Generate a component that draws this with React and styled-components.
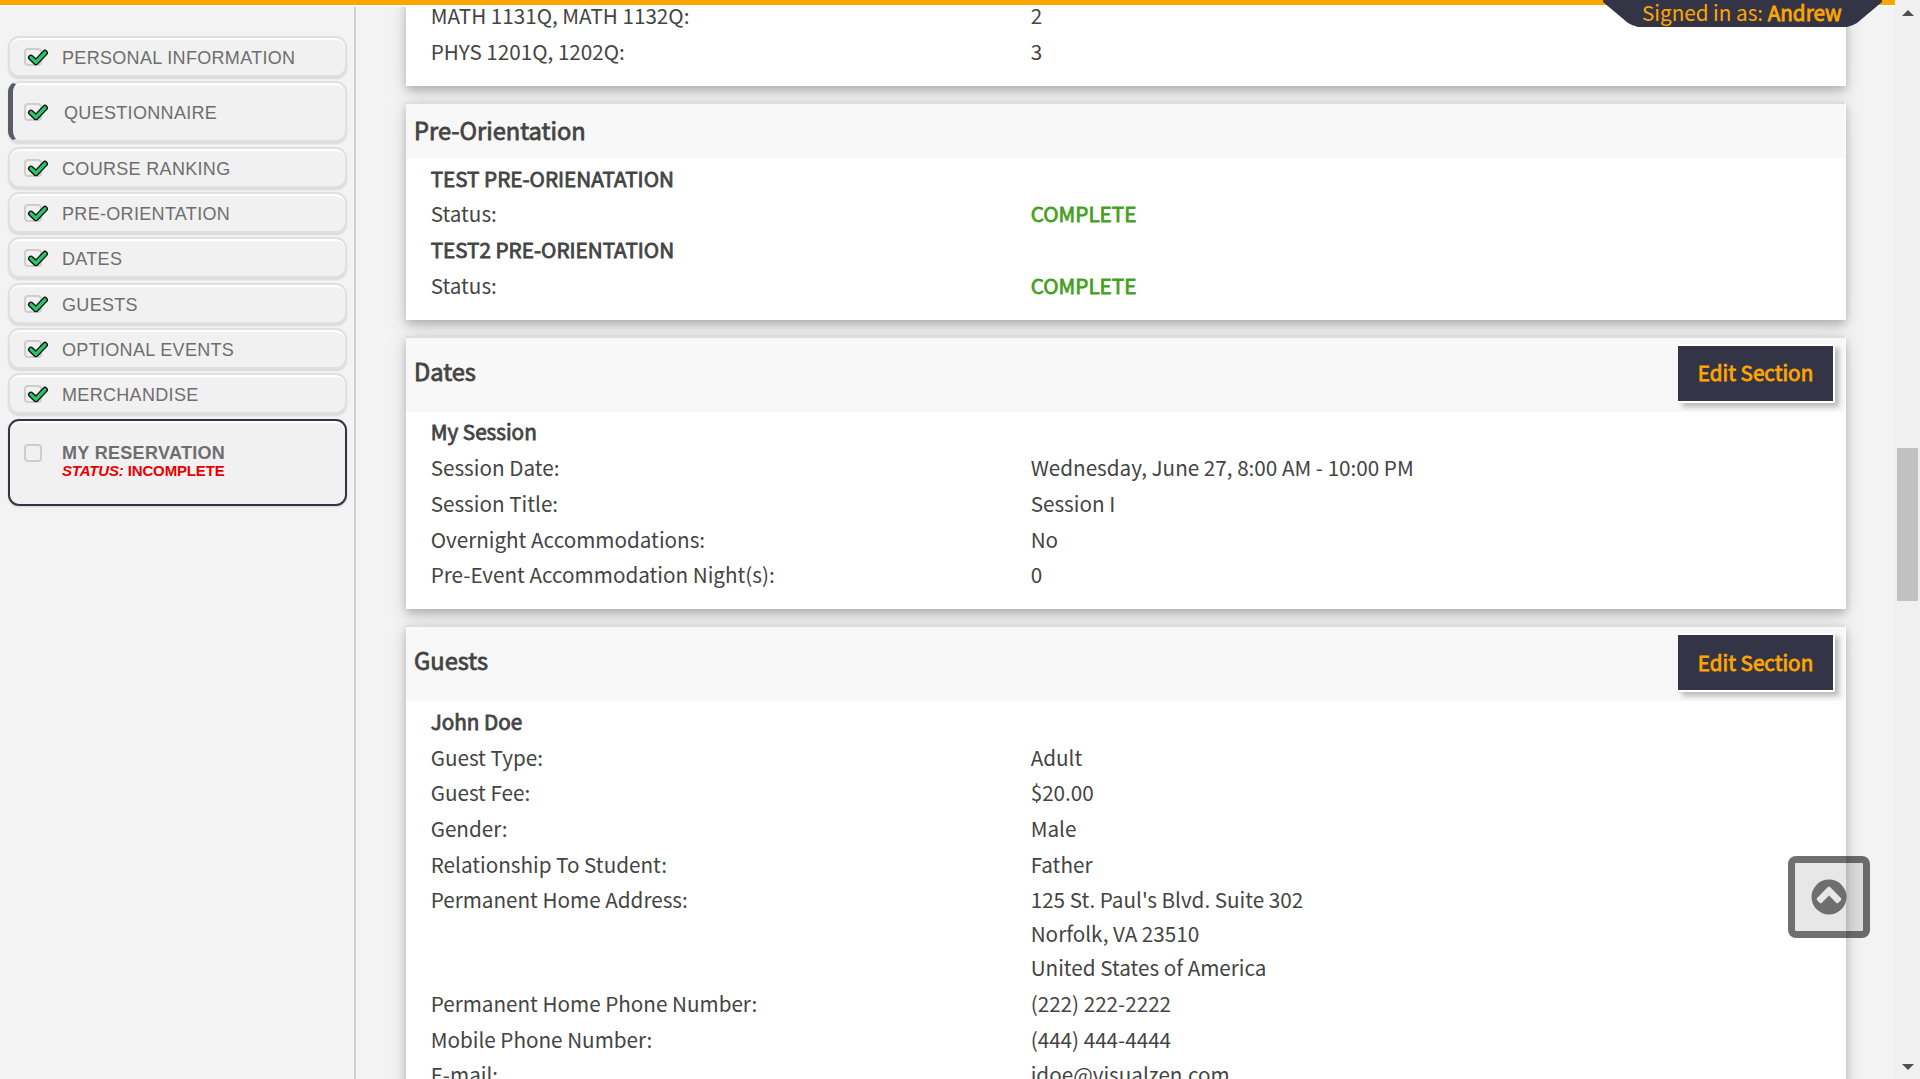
import React from 'react';
import styled, { createGlobalStyle, css } from 'styled-components';

const NAVY = '#333546';
const ORANGE = '#ffa500';
const SANS = '"Noto Sans CJK SC", "Source Sans Pro", sans-serif';

const GlobalStyle = createGlobalStyle`
  * { box-sizing: border-box; }
  body {
    margin: 0;
    overflow: hidden;
    background: #f3f3f3;
    color: #444;
    font-family: ${SANS};
    font-size: 20.66px;
    line-height: 33.95px;
  }
`;

const heavy = css`-webkit-text-stroke: 0.8px currentColor;`;

const Window = styled.div`
  display: flex;
  height: 1079px;
  overflow: hidden;
`;

const Page = styled.div`
  position: relative;
  flex: 1;
  min-width: 0;
  display: flex;
  flex-direction: column;
`;

const TopBar = styled.header`
  flex: none;
  height: 7px;
  background: ${ORANGE};
  border-bottom: 2px solid #fff;
`;

const SignedIn = styled.div`
  position: absolute;
  top: 0;
  right: 13px;
  width: 279px;
  height: 27px;
  padding-left: 39px;
  line-height: 25px;
  white-space: nowrap;
  color: ${ORANGE};
  background: ${NAVY};
  clip-path: polygon(0 0, 100% 0, 100% 2px, 254px 23px, 250px 25px, 244px 27px, 35px 27px, 29px 25px, 25px 23px, 0 2px);
  b { font-weight: 400; ${heavy} }
`;

const Body = styled.div`
  flex: 1;
  min-height: 0;
  display: flex;
  overflow: hidden;
`;

const Sidebar = styled.nav`
  flex: none;
  width: 356px;
  padding: 29px 7px 0 8px;
  border-right: 2px solid #cfcfcf;
  display: flex;
  flex-direction: column;
  gap: 4.35px;
  font-family: "Liberation Sans", Arial, sans-serif;
  color: #6e6e6e;
`;

const NavItem = styled.a`
  flex: none;
  width: 339px;
  height: ${p => p.$height || 41}px;
  display: flex;
  align-items: center;
  padding-left: ${p => (p.$current ? 11 : 14)}px;
  border: 2px solid ${p => (p.$outlined ? NAVY : '#e0e0e0')};
  ${p => p.$current && 'border-left: 5px solid #5a5c69;'}
  border-radius: 11px;
  background: #f1f1f1;
  box-shadow: ${p => (p.$outlined ? '0 1px 2px rgba(0,0,0,.12)' : '0 2px 2px rgba(0,0,0,.11)')}, inset 0 2px 1px #fff;
`;

const CheckBox = styled.span`
  position: relative;
  flex: none;
  width: 18px;
  height: 18px;
  margin-right: ${p => (p.$current ? 22 : 20)}px;
  margin-top: ${p => (p.$up ? -19 : 1)}px;
  border: 2px solid #cecece;
  border-radius: 4px;
  svg { position: absolute; left: 1px; top: -1px; }
`;

const NavText = styled.span`
  font-size: 18px;
  line-height: 20px;
  letter-spacing: 0.32px;
  white-space: nowrap;
  margin-top: ${p => (p.$bold ? -2.5 : 2.7)}px;
  font-weight: ${p => (p.$bold ? 700 : 400)};
`;

const NavStatus = styled.small`
  display: block;
  margin-top: -1px;
  font-size: 15px;
  letter-spacing: -0.15px;
  line-height: 17px;
  font-weight: 700;
  color: #e60000;
`;

const Content = styled.main`
  flex: 1;
  display: flex;
  flex-direction: column;
  gap: 16.2px;
  margin-top: -8px;
  padding: 0 49px 0 50px;
`;

const Card = styled.section`
  flex: none;
  background: #fff;
  box-shadow: 0 4px 8px rgba(0, 0, 0, 0.2), 0 6px 20px rgba(0, 0, 0, 0.13);
`;

const CardHead = styled.div`
  height: ${p => (p.$tall ? 76 : 56)}px;
  margin-right: 1px;
  padding: 6px 10px 0 8px;
  display: flex;
  justify-content: space-between;
  align-items: flex-start;
  background: #f8f8f8;
  border-top: 2px solid #dedede;
`;

const CardTitle = styled.h2`
  margin: ${p => (p.$tall ? 10 : 3)}px 0 0;
  font-size: 23.65px;
  font-weight: 400;
  line-height: 34px;
  ${heavy}
`;

const EditButton = styled.button`
  width: 157px;
  height: 59px;
  padding: 0 0 2.5px;
  border: 2px solid #fff;
  border-left: 0;
  background: ${NAVY};
  color: ${ORANGE};
  font: 400 20.66px/30px ${SANS};
  box-shadow: 4px 4px 5px rgba(0, 0, 0, 0.25);
  ${heavy}
`;

const Rows = styled.div`
  padding: ${p => (p.$flush ? '0.3px 0 14.9px' : '3.8px 0 15.3px')} 24.7px;
`;

const Row = styled.div`
  display: grid;
  grid-template-columns: 600px 1fr;
  padding-bottom: 1.72px;
`;

const Strong = styled.span`${heavy}`;

const Complete = styled.span`
  color: #479f22;
  ${heavy}
`;

const Line = styled.div``;

const ToTop = styled.button`
  position: absolute;
  left: 1788px;
  top: 856px;
  width: 82px;
  height: 82px;
  padding: 0 0 1px;
  display: flex;
  align-items: center;
  justify-content: center;
  border: 7px solid rgba(0, 0, 0, 0.56);
  border-radius: 8px;
  background: rgba(0, 0, 0, 0.095);
  background-clip: padding-box;
`;

const ScrollTrack = styled.div`
  flex: none;
  width: 25px;
  display: flex;
  flex-direction: column;
  align-items: center;
  justify-content: space-between;
  padding: 10px 0 9px;
  background: #f0f0f0;
`;

const ScrollThumb = styled.div`
  width: 21px;
  height: 153px;
  margin-bottom: 31px;
  background: #c1c1c1;
`;

const Arrow = styled.div`
  width: 0;
  height: 0;
  border: 6px solid transparent;
  ${p => (p.$down
    ? 'border-bottom: 0; border-top-color: #505050;'
    : 'border-top: 0; border-bottom-color: #505050;')}
`;

const Tick = () => (
  <svg width="21" height="18" viewBox="0 0 21 18" fill="none" strokeLinejoin="round" strokeLinecap="round">
    <path d="M4 8.6 L9 13.2 L18 3.8" stroke="#111" strokeWidth="6" />
    <path d="M4 8.6 L9 13.2 L18 3.8" stroke="#2ac769" strokeWidth="3.3" />
  </svg>
);

const NAV = ['PERSONAL INFORMATION', 'QUESTIONNAIRE', 'COURSE RANKING', 'PRE-ORIENTATION', 'DATES', 'GUESTS', 'OPTIONAL EVENTS', 'MERCHANDISE'];

const SECTIONS = [
  { rows: [['MATH 1131Q, MATH 1132Q:', '2'], ['PHYS 1201Q, 1202Q:', '3']] },
  {
    title: 'Pre-Orientation',
    rows: [
      ['TEST PRE-ORIENATATION'],
      ['Status:', <Complete>COMPLETE</Complete>],
      ['TEST2 PRE-ORIENTATION'],
      ['Status:', <Complete>COMPLETE</Complete>],
    ],
  },
  {
    title: 'Dates',
    editable: true,
    rows: [
      ['My Session'],
      ['Session Date:', 'Wednesday, June 27, 8:00 AM - 10:00 PM'],
      ['Session Title:', 'Session I'],
      ['Overnight Accommodations:', 'No'],
      ['Pre-Event Accommodation Night(s):', '0'],
    ],
  },
  {
    title: 'Guests',
    editable: true,
    rows: [
      ['John Doe'],
      ['Guest Type:', 'Adult'],
      ['Guest Fee:', '$20.00'],
      ['Gender:', 'Male'],
      ['Relationship To Student:', 'Father'],
      ['Permanent Home Address:', ["125 St. Paul's Blvd. Suite 302", 'Norfolk, VA 23510', 'United States of America'].map(l => <Line key={l}>{l}</Line>)],
      ['Permanent Home Phone Number:', '(222) 222-2222'],
      ['Mobile Phone Number:', '(444) 444-4444'],
      ['E-mail:', 'jdoe@visualzen.com'],
    ],
  },
];

function Section({ title, editable, rows }) {
  return (
    <Card>
      {title && (
        <CardHead $tall={editable}>
          <CardTitle $tall={editable}>{title}</CardTitle>
          {editable && <EditButton>Edit Section</EditButton>}
        </CardHead>
      )}
      <Rows $flush={!title}>
        {rows.map(([label, value], i) => (
          <Row key={i}>
            {value ? <span>{label}</span> : <Strong>{label}</Strong>}
            {value && <div>{value}</div>}
          </Row>
        ))}
      </Rows>
    </Card>
  );
}

export default function App() {
  return (
    <Window>
      <GlobalStyle />
      <Page>
        <TopBar />
        <Body>
          <Sidebar>
            {NAV.map((name, i) => (
              <NavItem key={name} $current={i === 1} $height={i === 1 ? 61 : 41}>
                <CheckBox $current={i === 1}><Tick /></CheckBox>
                <NavText>{name}</NavText>
              </NavItem>
            ))}
            <NavItem $outlined $height={87}>
              <CheckBox $up />
              <NavText $bold>
                MY RESERVATION
                <NavStatus><em>STATUS:</em> INCOMPLETE</NavStatus>
              </NavText>
            </NavItem>
          </Sidebar>
          <Content>
            {SECTIONS.map((s, i) => <Section key={i} {...s} />)}
          </Content>
        </Body>
        <SignedIn>Signed in as: <b>Andrew</b></SignedIn>
        <ToTop aria-label="Back to top">
          <svg width="36" height="36" viewBox="-18 -18 36 36">
            <path
              fill="rgba(0,0,0,.52)"
              fillRule="evenodd"
              d="M0 -17.5 A17.5 17.5 0 1 1 0 17.5 A17.5 17.5 0 1 1 0 -17.5 Z M-1.1 -9.9 L-11.9 1.1 Q-12.9 2.2 -11.9 3.3 L-9.4 5.8 Q-8.3 6.9 -7.2 5.8 L0 -1.4 L7.2 5.8 Q8.3 6.9 9.4 5.8 L11.9 3.3 Q12.9 2.2 11.9 1.1 L1.1 -9.9 Q0 -11 -1.1 -9.9 Z"
            />
          </svg>
        </ToTop>
      </Page>
      <ScrollTrack>
        <Arrow />
        <ScrollThumb />
        <Arrow $down />
      </ScrollTrack>
    </Window>
  );
}
